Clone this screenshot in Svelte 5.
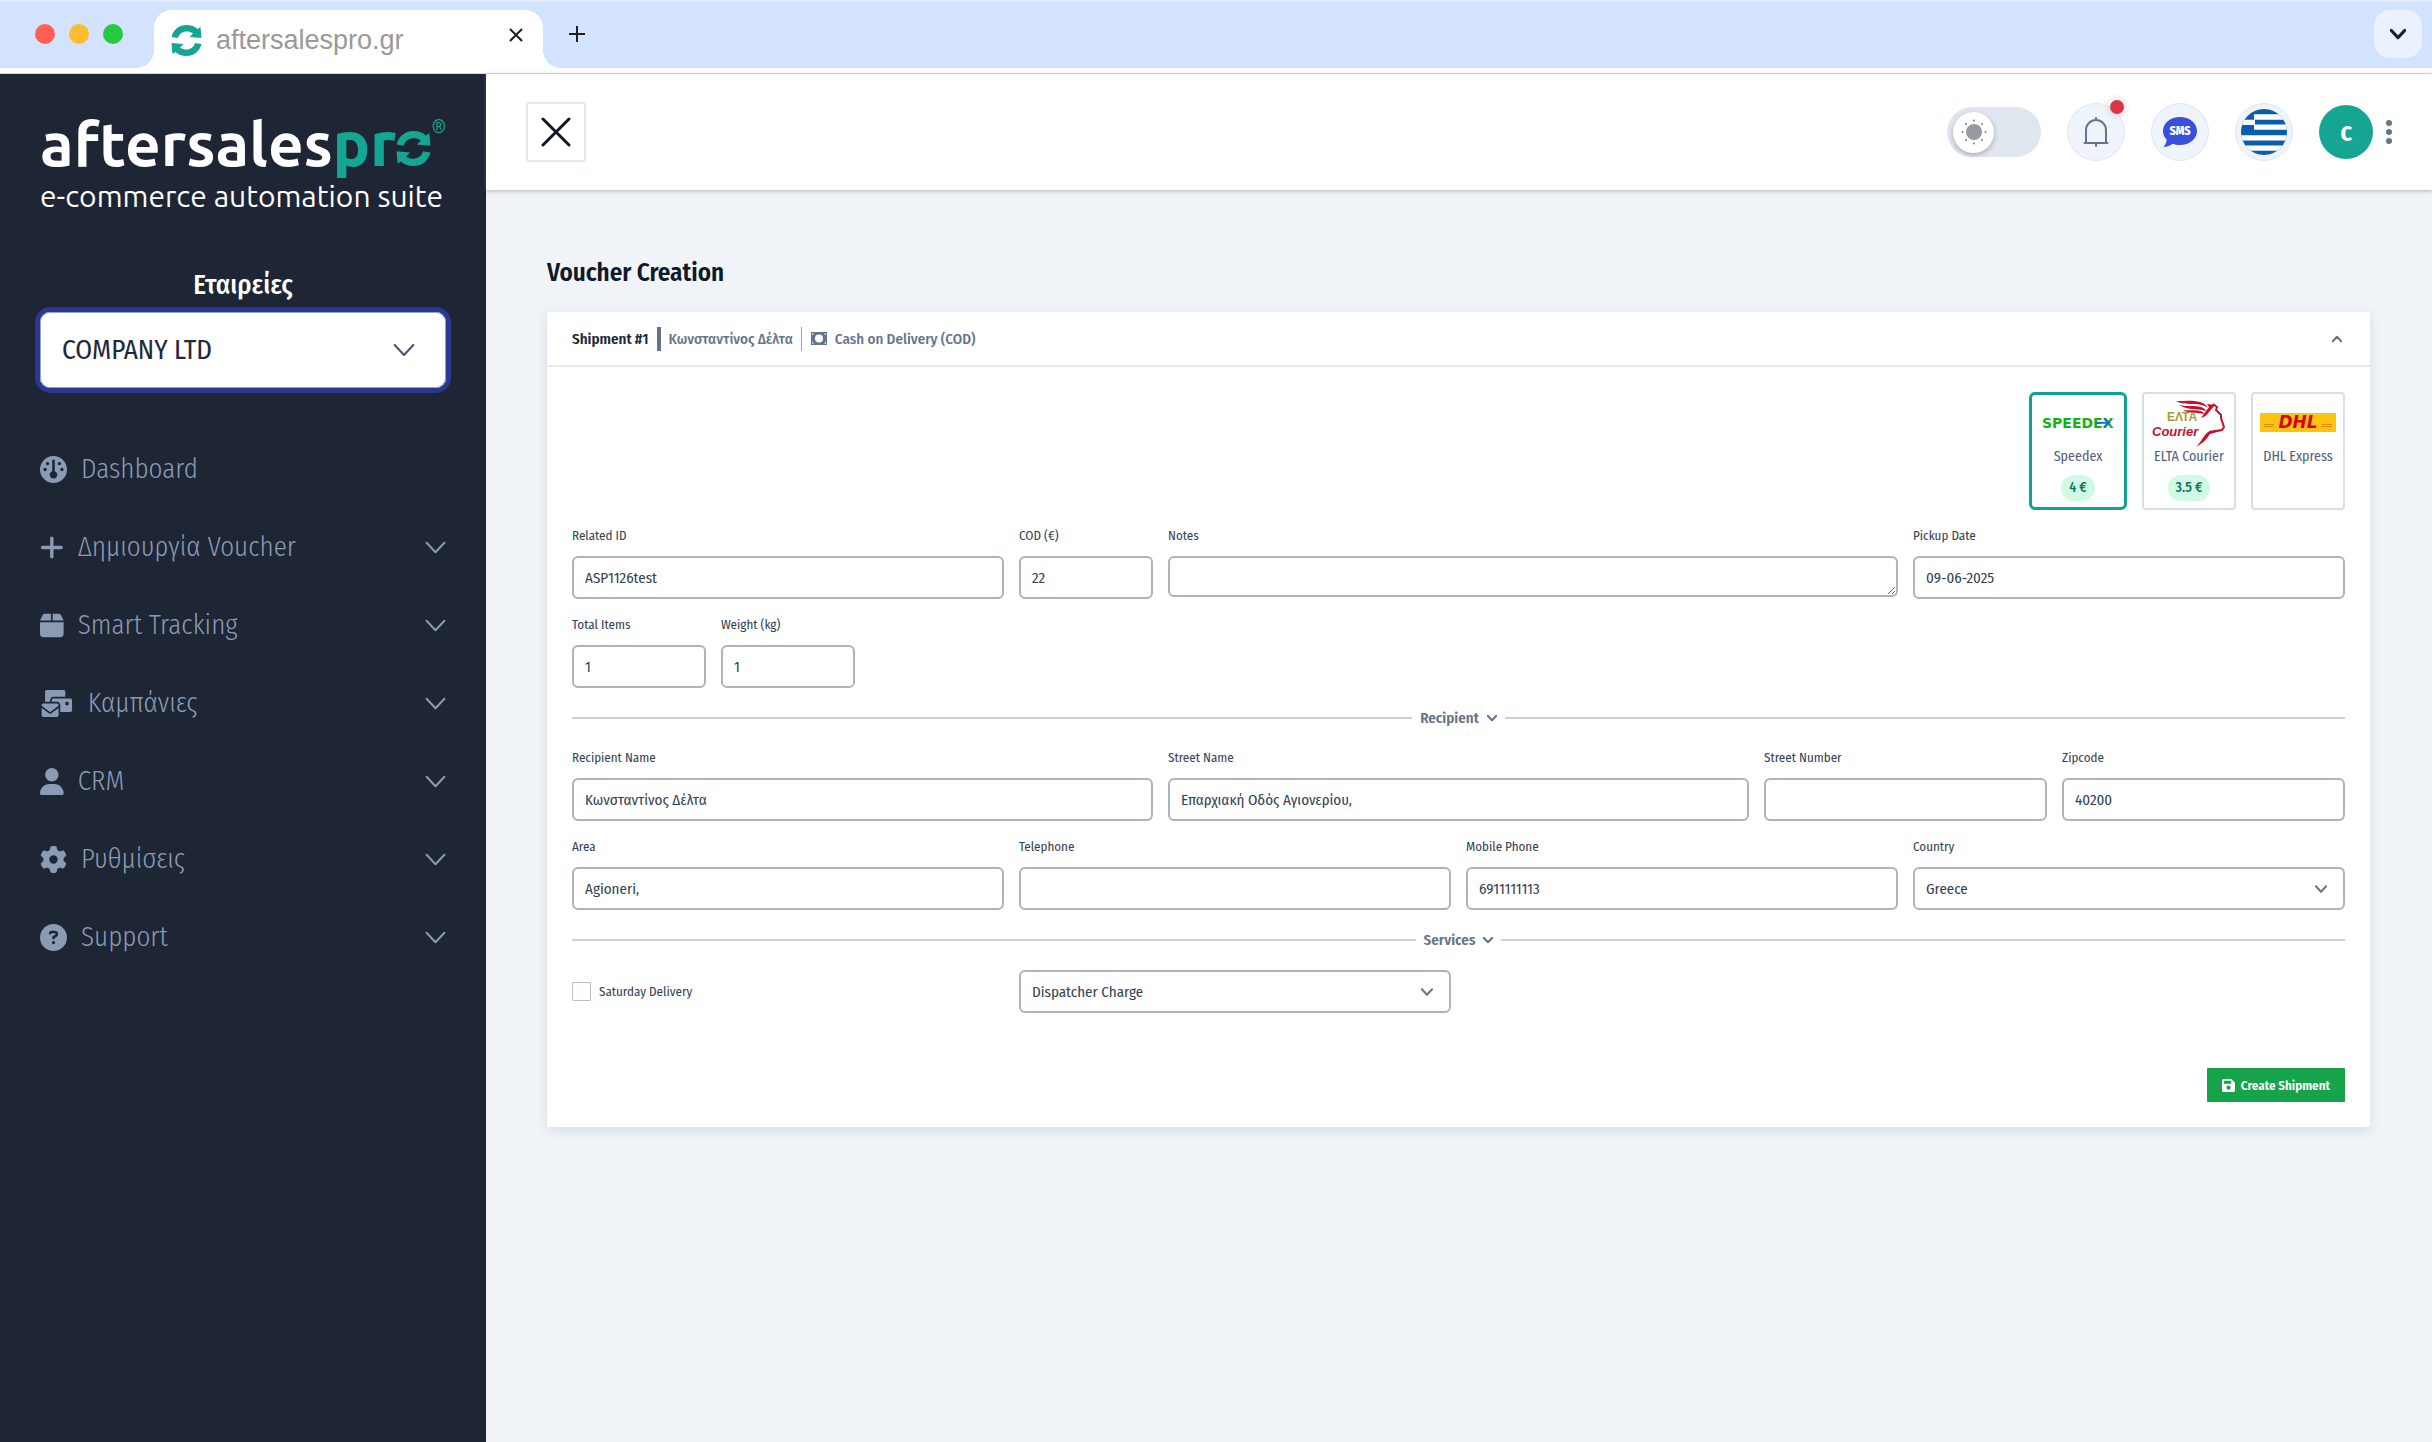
<script>
	const menu = [
		{
			label: 'Dashboard',
			box: 512,
			path: 'M256 512A256 256 0 1 0 256 0a256 256 0 1 0 0 512zM232 88a24 24 0 1 1 48 0V287a72 72 0 1 1 -48 0V88zM144 112a32 32 0 1 1 0 64 32 32 0 1 1 0-64zM368 112a32 32 0 1 1 0 64 32 32 0 1 1 0-64zM96 224a32 32 0 1 1 0 64 32 32 0 1 1 0-64zM416 224a32 32 0 1 1 0 64 32 32 0 1 1 0-64z'
		},
		{
			label: 'Δημιουργία Voucher',
			box: 448,
			open: true,
			path: 'M256 80c0-17.7-14.3-32-32-32s-32 14.3-32 32V224H48c-17.7 0-32 14.3-32 32s14.3 32 32 32H192V432c0 17.7 14.3 32 32 32s32-14.3 32-32V288H400c17.7 0 32-14.3 32-32s-14.3-32-32-32H256V80z'
		},
		{
			label: 'Smart Tracking',
			box: 448,
			open: true,
			path: 'M50.7 58.5L0 160H208V32H93.7C75.5 32 58.9 42.3 50.7 58.5zM240 160H448L397.3 58.5C389.1 42.3 372.5 32 354.3 32H240V160zm208 32H0V416c0 35.3 28.7 64 64 64H384c35.3 0 64-28.7 64-64V192z'
		},
		{
			label: 'Καμπάνιες',
			box: 640,
			open: true,
			path: 'M128 0C110.3 0 96 14.3 96 32V224h96V192c0-35.3 28.7-64 64-64H480V32c0-17.7-14.3-32-32-32H128zM256 160c-17.7 0-32 14.3-32 32v32h96c35.3 0 64 28.7 64 64V416H576c17.7 0 32-14.3 32-32V192c0-17.7-14.3-32-32-32H256zm240 64h32c8.8 0 16 7.2 16 16v32c0 8.8-7.2 16-16 16H496c-8.8 0-16-7.2-16-16V240c0-8.8 7.2-16 16-16zM64 256c-17.7 0-32 14.3-32 32v13L187.1 415.9c1.4 1 3.1 1.6 4.9 1.6s3.5-.6 4.9-1.6L352 301V288c0-17.7-14.3-32-32-32H64zm288 84.8L216 441.6c-6.9 5.1-15.3 7.9-24 7.9s-17-2.8-24-7.9L32 340.8V480c0 17.7 14.3 32 32 32H320c17.7 0 32-14.3 32-32V340.8z'
		},
		{
			label: 'CRM',
			box: 448,
			open: true,
			path: 'M224 256A128 128 0 1 0 224 0a128 128 0 1 0 0 256zm-45.7 48C79.8 304 0 383.8 0 482.3C0 498.7 13.3 512 29.7 512H418.3c16.4 0 29.7-13.3 29.7-29.7C448 383.8 368.2 304 269.7 304H178.3z'
		},
		{
			label: 'Ρυθμίσεις',
			box: 512,
			open: true,
			path: 'M495.9 166.6c3.2 8.7 .5 18.4-6.4 24.6l-43.3 39.4c1.1 8.3 1.7 16.8 1.7 25.4s-.6 17.1-1.7 25.4l43.3 39.4c6.9 6.2 9.6 15.9 6.4 24.6c-4.4 11.9-9.7 23.3-15.8 34.3l-4.7 8.1c-6.6 11-14 21.4-22.1 31.2c-5.9 7.2-15.7 9.6-24.5 6.8l-55.7-17.7c-13.4 10.3-28.2 18.9-44 25.4l-12.5 57.1c-2 9.1-9 16.3-18.2 17.8c-13.8 2.3-28 3.5-42.5 3.5s-28.7-1.2-42.5-3.5c-9.2-1.5-16.2-8.7-18.2-17.8l-12.5-57.1c-15.8-6.5-30.6-15.1-44-25.4L83.1 425.9c-8.8 2.8-18.6 .3-24.5-6.8c-8.1-9.8-15.5-20.2-22.1-31.2l-4.7-8.1c-6.1-11-11.4-22.4-15.8-34.3c-3.2-8.7-.5-18.4 6.4-24.6l43.3-39.4C64.6 273.1 64 264.6 64 256s.6-17.1 1.7-25.4L22.4 191.2c-6.9-6.2-9.6-15.9-6.4-24.6c4.4-11.9 9.7-23.3 15.8-34.3l4.7-8.1c6.6-11 14-21.4 22.1-31.2c5.9-7.2 15.7-9.6 24.5-6.8l55.7 17.7c13.4-10.3 28.2-18.9 44-25.4l12.5-57.1c2-9.1 9-16.3 18.2-17.8C227.3 1.2 241.5 0 256 0s28.7 1.2 42.5 3.5c9.2 1.5 16.2 8.7 18.2 17.8l12.5 57.1c15.8 6.5 30.6 15.1 44 25.4l55.7-17.7c8.8-2.8 18.6-.3 24.5 6.8c8.1 9.8 15.5 20.2 22.1 31.2l4.7 8.1c6.1 11 11.4 22.4 15.8 34.3zM256 336a80 80 0 1 0 0-160 80 80 0 1 0 0 160z'
		},
		{
			label: 'Support',
			box: 512,
			open: true,
			path: 'M256 512A256 256 0 1 0 256 0a256 256 0 1 0 0 512zM169.8 165.3c7.9-22.3 29.1-37.3 52.8-37.3h58.3c34.9 0 63.1 28.3 63.1 63.1c0 22.6-12.1 43.5-31.7 54.8L280 264.4c-.2 13-10.9 23.6-24 23.6c-13.3 0-24-10.7-24-24V250.5c0-8.6 4.6-16.5 12.1-20.8l44.3-25.4c4.7-2.7 7.6-7.7 7.6-13.1c0-8.4-6.8-15.1-15.1-15.1H222.6c-3.4 0-6.4 2.1-7.5 5.3l-.4 1.2c-4.4 12.5-18.2 19-30.6 14.6s-19-18.2-14.6-30.6l.4-1.2zM224 352a32 32 0 1 1 64 0 32 32 0 1 1 -64 0z'
		}
	];

	const shipmentFields = [
		{ id: 'related', label: 'Related ID', value: 'ASP1126test', span: 3 },
		{ id: 'cod', label: 'COD (€)', value: '22', span: 1 },
		{ id: 'notes', label: 'Notes', value: '', span: 5, type: 'textarea' },
		{ id: 'pickup', label: 'Pickup Date', value: '09-06-2025', span: 3 },
		{ id: 'items', label: 'Total Items', value: '1', span: 1 },
		{ id: 'weight', label: 'Weight (kg)', value: '1', span: 1 }
	];

	const recipientFields = [
		{ id: 'name', label: 'Recipient Name', value: 'Κωνσταντίνος Δέλτα', span: 4 },
		{ id: 'street', label: 'Street Name', value: 'Επαρχιακή Οδός Αγιονερίου,', span: 4 },
		{ id: 'number', label: 'Street Number', value: '', span: 2 },
		{ id: 'zip', label: 'Zipcode', value: '40200', span: 2 },
		{ id: 'area', label: 'Area', value: 'Agioneri,', span: 3 },
		{ id: 'phone', label: 'Telephone', value: '', span: 3 },
		{ id: 'mobile', label: 'Mobile Phone', value: '6911111113', span: 3 },
		{ id: 'country', label: 'Country', value: 'Greece', span: 3, type: 'select' }
	];

	const couriers = [
		{ id: 'speedex', name: 'Speedex', price: '4 €' },
		{ id: 'elta', name: 'ELTA Courier', price: '3.5 €' },
		{ id: 'dhl', name: 'DHL Express' }
	];

	let courier = $state('speedex');
</script>

{#snippet chevron(size)}
	<svg class="chevron" width={size} height={size} viewBox="0 0 20 20" aria-hidden="true">
		<path d="M1.5 5.5 10 14.5l8.5-9" />
	</svg>
{/snippet}

{#snippet cycle(size)}
	<svg class="cycle" width={size} height={size} viewBox="0 0 30 31" aria-hidden="true">
		<path d="M0 12C2 4 8 0 15 0c4.5 0 8.5 1.5 11 4l3-2 1 11-12-1 3.5-3.5C19.5 7 17.5 6.5 15 6.5c-4 0-7.5 2.5-8.5 6.5z" />
		<path transform="rotate(180 15 15.5)" d="M0 12C2 4 8 0 15 0c4.5 0 8.5 1.5 11 4l3-2 1 11-12-1 3.5-3.5C19.5 7 17.5 6.5 15 6.5c-4 0-7.5 2.5-8.5 6.5z" />
	</svg>
{/snippet}

{#snippet dropdown(id, value, label)}
	<div class="select">
		<select {id} aria-label={label}>
			<option>{value}</option>
		</select>
		{@render chevron(12)}
	</div>
{/snippet}

{#snippet fields(list)}
	<div class="grid">
		{#each list as field}
			<div class="field span-{field.span}">
				<label for={field.id}>{field.label}</label>
				{#if field.type === 'textarea'}
					<textarea id={field.id}></textarea>
				{:else if field.type === 'select'}
					{@render dropdown(field.id, field.value)}
				{:else}
					<input id={field.id} type="text" value={field.value} />
				{/if}
			</div>
		{/each}
	</div>
{/snippet}

<div class="browser">
	<div class="lights">
		<span class="red"></span>
		<span class="yellow"></span>
		<span class="green"></span>
	</div>
	<div class="tab">
		{@render cycle(31)}
		<span class="tab-title">aftersalespro.gr</span>
		<button class="plain raised" aria-label="Close tab">
			<svg width="14" height="14" viewBox="0 0 14 14"><path d="M1 1l12 12M13 1L1 13" /></svg>
		</button>
	</div>
	<button class="plain raised new-tab" aria-label="New tab">
		<svg width="18" height="18" viewBox="0 0 18 18"><path d="M9 1v16M1 9h16" /></svg>
	</button>
	<button class="tab-list raised" aria-label="Search tabs">{@render chevron(16)}</button>
</div>

<div class="app">
	<aside>
		<div class="brand">
			<div class="logo">aftersales<b>pr</b>{@render cycle(35)}<sup>®</sup></div>
			<div class="tagline">e-commerce automation suite</div>
		</div>
		<label class="company-label" for="company">Εταιρείες</label>
		<div class="company">
			<select id="company">
				<option>COMPANY LTD</option>
			</select>
			{@render chevron(22)}
		</div>
		<nav>
			{#each menu as item}
				<a href="#top">
					<svg class="menu-icon" height="27" viewBox="0 0 {item.box} 512" aria-hidden="true">
						<path fill-rule="evenodd" d={item.path} />
					</svg>
					<span>{item.label}</span>
					{#if item.open}{@render chevron(21)}{/if}
				</a>
			{/each}
		</nav>
	</aside>

	<div class="page">
		<header>
			<button class="close" aria-label="Close menu">
				<svg width="30" height="30" viewBox="0 0 30 30"><path d="M2 2l26 26M28 2L2 28" /></svg>
			</button>
			<div class="tools">
				<button class="toggle" aria-label="Toggle dark mode">
					<span class="knob">
						<svg width="26" height="26" viewBox="0 0 26 26">
							<circle cx="13" cy="13" r="8" />
							<g class="rays">
								<circle cx="13" cy="1.5" r="1" /><circle cx="13" cy="24.5" r="1" />
								<circle cx="1.5" cy="13" r="1" /><circle cx="24.5" cy="13" r="1" />
								<circle cx="5" cy="5" r="1" /><circle cx="21" cy="5" r="1" />
								<circle cx="5" cy="21" r="1" /><circle cx="21" cy="21" r="1" />
							</g>
						</svg>
					</span>
				</button>
				<button class="round" aria-label="Notifications">
					<svg class="bell" width="26" height="30" viewBox="0 0 26 30">
						<path d="M3 26V13a10 10 0 0 1 20 0v13M1.5 26h23M13 3V1M13 26v3" />
					</svg>
					<span class="dot"></span>
				</button>
				<button class="round" aria-label="SMS">
					<svg width="34" height="32" viewBox="0 0 34 32">
						<path fill="#3b4fdf" d="M17 1C26.4 1 34 7 34 15s-7.6 14-17 14c-2.7 0-5.2-.5-7.4-1.3C7.4 29.6 4 31 .5 31c1.9-2 3.3-5 3.1-7.4C1.3 21.2 0 18.3 0 15 0 7 7.6 1 17 1z" />
						<text x="17" y="19" text-anchor="middle" class="sms">SMS</text>
					</svg>
				</button>
				<button class="round" aria-label="Greek">
					<svg width="48" height="48" viewBox="0 0 48 48">
						<clipPath id="disc"><circle cx="24" cy="24" r="23" /></clipPath>
						<g clip-path="url(#disc)">
							<rect width="48" height="48" fill="#0b5cad" />
							<path stroke="#fff" stroke-width="5.3" d="M14 9h34M14 19.2h34M0 29.8h48M0 40.2h48M0 14.4h15" />
						</g>
					</svg>
				</button>
				<button class="avatar">c</button>
				<button class="plain" aria-label="More">
					<svg class="more" width="6" height="24" viewBox="0 0 6 24">
						<circle cx="3" cy="3" r="3" /><circle cx="3" cy="12" r="3" /><circle cx="3" cy="21" r="3" />
					</svg>
				</button>
			</div>
		</header>

		<main>
			<h1>Voucher Creation</h1>
			<form class="card">
				<div class="card-head">
					<strong>Shipment #1</strong>
					<span class="customer">Κωνσταντίνος Δέλτα</span>
					<span class="payment">
						<svg width="18" height="13" viewBox="0 0 18 13">
							<path fill-rule="evenodd" d="M1 0h16v13H1zM9 2.5a4 4 0 1 0 0 8 4 4 0 0 0 0-8zM2 1.500v2l2-2zM16 1.500v2l-2-2zM2 11.500v-2l2 2zM16 11.500v-2l-2 2z" />
						</svg>
						Cash on Delivery (COD)
					</span>
					<button type="button" class="plain collapse" aria-label="Collapse">{@render chevron(10)}</button>
				</div>

				<div class="card-body">
					<div class="couriers">
						{#each couriers as c}
							<button type="button" class="courier" class:selected={courier === c.id} onclick={() => (courier = c.id)}>
								{#if c.id === 'speedex'}
									<svg width="76" height="48" viewBox="0 0 76 48">
										<text x="2" y="28" class="speedex">SPEEDEX</text>
										<path stroke="#1a6fd0" stroke-width="2" fill="none" d="M56 22.8h13M64 18.3l5 4.5-5 4.5" />
									</svg>
								{:else if c.id === 'elta'}
									<svg width="76" height="48" viewBox="0 0 76 48">
										<g fill="#c8102e">
											<path d="M25 1c9 0 17-1 24 1 4 1 6 3 8 6-5-3-8-4-13-4C37 4 30 4 25 1z" />
											<path d="M28 5c8 2 16 0 22 2 3 1 4 2 5 4-7-3-18 0-27-6z" />
											<path d="M32 10c7 1 13-1 20 2l1 2c-7-2-15 0-21-4z" />
											<path d="M56 4l8 1-6 7c-2 3-4 5-8 6l5-7 3-4z" />
											<path d="M45 47c6-6 7-11 12-15l13-1-11 3c-3 5-7 9-14 13z" />
										</g>
										<path fill="none" stroke="#c8102e" stroke-width="2" d="M62 4l4 3-1 3 5 5v3l3 9-2 3-13 2" />
										<text x="16" y="21" class="elta">ΕΛΤΑ</text>
										<text x="1" y="36" class="elta-courier">Courier</text>
									</svg>
								{:else}
									<svg width="76" height="48" viewBox="0 0 76 48">
										<rect y="13" width="76" height="19" fill="#fbc412" />
										<path stroke="#e08a16" d="M4 24.5h10M4 26.5h9M62 24.5h10M61 26.5h11" />
										<text x="38" y="28" text-anchor="middle" class="dhl">DHL</text>
									</svg>
								{/if}
								<span class="courier-name">{c.name}</span>
								{#if c.price}<span class="price">{c.price}</span>{/if}
							</button>
						{/each}
					</div>

					{@render fields(shipmentFields)}

					<button type="button" class="divider">Recipient {@render chevron(10)}</button>

					{@render fields(recipientFields)}

					<button type="button" class="divider">Services {@render chevron(10)}</button>

					<div class="grid services">
						<label class="check span-3">
							<input type="checkbox" />
							Saturday Delivery
						</label>
						<div class="span-3">
							{@render dropdown('charge', 'Dispatcher Charge', 'Charge')}
						</div>
					</div>

					<div class="actions">
						<button type="button" class="create">
							<svg width="13" height="13" viewBox="0 0 14 14">
								<path fill-rule="evenodd" d="M2 0h8l4 4v8a2 2 0 0 1-2 2H2a2 2 0 0 1-2-2V2a2 2 0 0 1 2-2zM2 2v3h8V2zM7 7a2.3 2.3 0 1 0 0 4.6A2.3 2.3 0 0 0 7 7z" />
							</svg>
							Create Shipment
						</button>
					</div>
				</div>
			</form>
		</main>
	</div>
</div>

<style>
	:global(body) {
		margin: 0;
		background: #f0f4f9;
		color: #1e293b;
		font-family: 'Fira Sans Condensed', 'Liberation Sans Narrow', Roboto, sans-serif;
	}

	:global(*) {
		box-sizing: border-box;
	}

	:global(#app) {
		display: flex;
		flex-direction: column;
		min-height: 100vh;
	}

	button,
	input,
	select,
	textarea {
		font: inherit;
		color: inherit;
		margin: 0;
	}

	button {
		cursor: pointer;
	}

	svg {
		display: block;
		flex: none;
	}

	.plain {
		display: flex;
		background: none;
		border: none;
		padding: 0;
	}

	.chevron {
		fill: none;
		stroke: currentColor;
		stroke-width: 2;
		stroke-linecap: round;
		stroke-linejoin: round;
	}

	.chevron path {
		vector-effect: non-scaling-stroke;
	}

	.cycle {
		fill: #14a693;
	}

	/* Browser bar */
	.browser {
		display: flex;
		align-items: center;
		height: 74px;
		padding: 8px 10px 6px 35px;
		background: linear-gradient(#d3e2fd 66px, #fff 66px, #fff 71px, #d5d7da 71px);
		border-top: 2px solid #e4edfd;
	}

	.raised {
		margin-bottom: 10px;
	}

	.lights {
		display: flex;
		gap: 14px;
		width: 119px;
		margin-bottom: 10px;
	}

	.lights span {
		width: 20px;
		height: 20px;
		border-radius: 50%;
	}

	.red {
		background: #ff5f57;
	}

	.yellow {
		background: #febc2e;
	}

	.green {
		background: #28c840;
	}

	.tab {
		position: relative;
		display: flex;
		align-items: center;
		gap: 14px;
		width: 389px;
		height: 58px;
		padding: 2px 20px 0 17px;
		background: #fff;
		border-radius: 18px 18px 0 0;
	}

	.tab::before,
	.tab::after {
		content: '';
		position: absolute;
		bottom: 0;
		width: 18px;
		height: 18px;
	}

	.tab::before {
		right: 100%;
		background: radial-gradient(circle at 0 0, transparent 18px, #fff 18px);
	}

	.tab::after {
		left: 100%;
		background: radial-gradient(circle at 100% 0, transparent 18px, #fff 18px);
	}

	.tab-title {
		flex: 1;
		font-family: 'Liberation Sans', Arial, sans-serif;
		font-size: 27px;
		color: #999;
	}

	.raised svg {
		stroke: #1f1f1f;
		stroke-width: 2;
	}

	.new-tab {
		margin-left: 25px;
	}

	.tab-list {
		display: flex;
		align-items: center;
		justify-content: center;
		width: 48px;
		height: 48px;
		margin-left: auto;
		border: none;
		border-radius: 16px;
		background: #ebf2fe;
	}

	.tab-list .chevron {
		stroke-width: 3;
	}

	/* Sidebar */
	.app {
		display: flex;
		flex: 1;
	}

	aside {
		flex: none;
		width: 486px;
		padding: 34px 40px;
		background: #1e2534;
		color: #8b9bb4;
	}

	.brand {
		font-family: Ubuntu, 'Noto Sans', sans-serif;
		color: #fff;
	}

	.logo {
		display: flex;
		align-items: baseline;
		height: 71px;
		font-size: 62px;
		font-weight: 700;
		line-height: 71px;
		white-space: nowrap;
	}

	.logo b {
		color: #14a693;
	}

	.logo sup {
		align-self: flex-start;
		font-size: 18px;
		font-weight: 400;
		line-height: 36px;
		color: #14a693;
	}

	.tagline {
		font-size: 30px;
		line-height: 34px;
		white-space: nowrap;
	}

	.company-label {
		display: block;
		margin-top: 56px;
		font-size: 27px;
		font-weight: 500;
		line-height: 32px;
		text-align: center;
		color: #fff;
	}

	.company {
		display: grid;
		align-items: center;
		margin-top: 11px;
		border-radius: 10px;
		background: #fff;
		box-shadow: 0 0 0 5px #2c3791;
		color: #1e293b;
	}

	.company > :global(*) {
		grid-area: 1 / 1;
	}

	.company select {
		width: 100%;
		height: 76px;
		padding: 0 21px;
		border: 1px solid #94a3b8;
		border-radius: 10px;
		background: none;
		font-size: 27px;
		appearance: none;
	}

	.company .chevron {
		justify-self: end;
		margin-right: 31px;
		color: #475569;
		pointer-events: none;
	}

	nav {
		margin-top: 42px;
	}

	nav a {
		display: flex;
		align-items: center;
		gap: 14px;
		height: 78px;
		font-size: 27px;
		font-weight: 300;
		color: inherit;
		text-decoration: none;
	}

	nav span {
		flex: 1;
	}

	.menu-icon {
		fill: currentColor;
	}

	/* Top bar */
	.page {
		flex: 1;
		min-width: 0;
	}

	header {
		display: flex;
		align-items: center;
		justify-content: space-between;
		height: 116px;
		padding: 0 40px;
		background: #fff;
		box-shadow: 0 1px 4px rgba(100, 116, 139, 0.5);
	}

	.close {
		display: flex;
		align-items: center;
		justify-content: center;
		width: 60px;
		height: 60px;
		padding: 0;
		border: 2px solid #e2e8f0;
		border-radius: 3px;
		background: #fff;
	}

	.close svg {
		stroke: #111827;
		stroke-width: 3;
		stroke-linecap: round;
	}

	.tools {
		display: flex;
		align-items: center;
		gap: 26px;
	}

	.toggle {
		display: flex;
		align-items: center;
		width: 94px;
		height: 50px;
		padding: 0 6px;
		border: none;
		border-radius: 25px;
		background: #e0e6ee;
	}

	.knob {
		display: flex;
		align-items: center;
		justify-content: center;
		width: 41px;
		height: 41px;
		border-radius: 50%;
		background: #fff;
		box-shadow: 0 2px 5px rgba(0, 0, 0, 0.25);
		fill: #969aa1;
	}

	.rays {
		fill: #7a8089;
	}

	.round {
		position: relative;
		display: flex;
		align-items: center;
		justify-content: center;
		width: 58px;
		height: 58px;
		padding: 0;
		border: 1px solid #e2e8f0;
		border-radius: 50%;
		background: #eff4fb;
	}

	.bell {
		fill: none;
		stroke: #64748b;
		stroke-width: 2;
		stroke-linecap: round;
	}

	.dot {
		position: absolute;
		top: -4px;
		right: 0;
		width: 14px;
		height: 14px;
		border-radius: 50%;
		background: #dc3545;
		box-shadow: 0 0 0 5px rgba(220, 53, 69, 0.06);
	}

	.sms {
		fill: #fff;
		font: 800 12px 'Fira Sans Condensed', sans-serif;
	}

	.avatar {
		width: 54px;
		height: 54px;
		padding: 0;
		border: none;
		border-radius: 50%;
		background: #14a693;
		color: #fff;
		font-size: 27px;
		font-weight: 600;
	}

	.tools .plain {
		margin-left: -13px;
	}

	.more {
		fill: #64748b;
	}

	/* Voucher form */
	main {
		padding: 63px 62px 62px 61px;
	}

	h1 {
		margin: 0;
		font-size: 25px;
		font-weight: 600;
		line-height: 40px;
		color: #111827;
	}

	.card {
		margin-top: 19px;
		border-radius: 2px;
		background: #fff;
		box-shadow: 0 3px 12px rgba(100, 116, 139, 0.2);
		font-size: 15px;
	}

	.card-head {
		display: flex;
		align-items: center;
		height: 55px;
		padding: 0 25px;
		border-bottom: 2px solid #e5e9f0;
		color: #64748b;
		font-weight: 500;
	}

	.card-head strong {
		font-weight: 600;
		color: #1e293b;
	}

	.card-head span {
		display: flex;
		align-items: center;
		gap: 7px;
		height: 24px;
		margin-left: 8px;
		padding-left: 8px;
	}

	.customer {
		border-left: 4px solid #64748b;
	}

	.payment {
		border-left: 1px solid #94a3b8;
	}

	.payment svg {
		fill: #64748b;
	}

	.collapse {
		margin-left: auto;
		margin-right: 3px;
		rotate: 180deg;
	}

	.card-body {
		padding: 25px;
	}

	.couriers {
		display: flex;
		justify-content: flex-end;
		gap: 15px;
		margin-bottom: 16px;
	}

	.courier {
		display: flex;
		flex-direction: column;
		align-items: center;
		height: 118px;
		padding: 6px 7px;
		border: 2px solid #d8dee9;
		border-radius: 4px;
		background: #fff;
		font-size: 14px;
	}

	.courier.selected {
		padding: 5px 8px;
		border: 3px solid #10a38f;
		border-radius: 6px;
	}

	.courier-name {
		line-height: 18px;
		color: #526079;
	}

	.price {
		margin-top: 9px;
		padding: 0 8px;
		border-radius: 13px;
		background: #d1fae5;
		color: #0f7658;
		font-weight: 500;
		line-height: 26px;
	}

	.speedex {
		fill: #12b312;
		font: 700 14px 'DejaVu Sans', sans-serif;
	}

	.elta {
		fill: #a59a3c;
		font: 700 12px 'Liberation Sans', sans-serif;
	}

	.elta-courier {
		fill: #c8102e;
		font: italic 700 13px 'Liberation Sans', sans-serif;
	}

	.dhl {
		fill: #d40511;
		font: italic 700 17px 'DejaVu Sans', sans-serif;
	}

	.grid {
		display: grid;
		grid-template-columns: repeat(12, 1fr);
		gap: 16px 15px;
	}

	.span-1 {
		grid-column: span 1;
	}

	.span-2 {
		grid-column: span 2;
	}

	.span-3 {
		grid-column: span 3;
	}

	.span-4 {
		grid-column: span 4;
	}

	.span-5 {
		grid-column: span 5;
	}

	.field {
		display: flex;
		flex-direction: column;
		gap: 10px;
		min-width: 0;
	}

	.field label {
		font-size: 13px;
		line-height: 20px;
		color: #334155;
	}

	.card input[type='text'],
	.card textarea,
	.card select {
		width: 100%;
		height: 43px;
		padding: 0 11px;
		border: 2px solid #adb2bf;
		border-radius: 6px;
		background: #fff;
		color: #334155;
		appearance: none;
	}

	.card textarea {
		display: block;
		height: 41px;
	}

	.select {
		display: grid;
		align-items: center;
	}

	.select > :global(*) {
		grid-area: 1 / 1;
	}

	.select .chevron {
		justify-self: end;
		margin-right: 18px;
		color: #64748b;
		pointer-events: none;
	}

	.divider {
		display: flex;
		align-items: center;
		gap: 8px;
		width: 100%;
		margin: 20px 0;
		padding: 0;
		border: none;
		background: none;
		color: #64748b;
		font-weight: 600;
		line-height: 20px;
	}

	.divider::before,
	.divider::after {
		content: '';
		flex: 1;
		height: 2px;
		background: #ccd0d9;
	}

	.services {
		align-items: center;
	}

	.check {
		display: flex;
		align-items: center;
		gap: 8px;
		font-size: 13px;
		color: #334155;
	}

	.check input {
		width: 19px;
		height: 19px;
		border: 1px solid #b8bfcc;
		border-radius: 1px;
		background: #fff;
		appearance: none;
	}

	.actions {
		display: flex;
		justify-content: flex-end;
		margin-top: 55px;
	}

	.create {
		display: flex;
		align-items: center;
		gap: 6px;
		height: 34px;
		padding: 0 15px;
		border: none;
		border-radius: 1px;
		background: #16a34a;
		color: #fff;
		font-size: 13px;
		font-weight: 600;
	}

	.create svg {
		fill: #fff;
	}
</style>
